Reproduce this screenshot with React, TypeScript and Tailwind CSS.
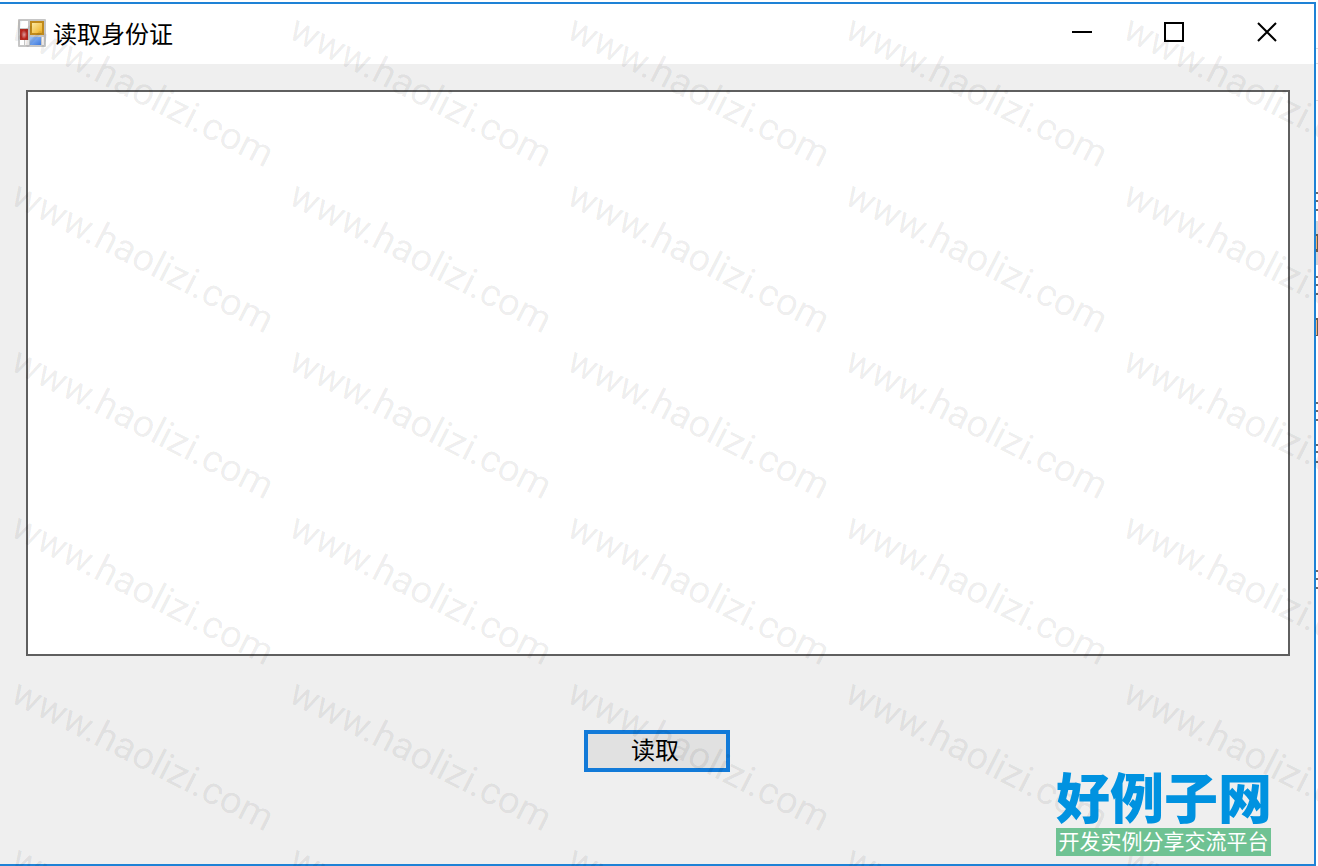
import React from 'react'

const WATERMARK_COUNT = 30

// Marks of the document that peek out behind the window's right edge
const edgeLines = [192, 200, 209, 276, 284, 293, 402, 410, 419, 444, 451, 461, 570, 578, 587]

const FormIcon: React.FC = () => (
  <svg width="28" height="28" viewBox="0 0 28 28" aria-hidden="true">
    <defs>
      <linearGradient id="gold" x1="0" y1="0" x2="1" y2="1">
        <stop offset="0" stopColor="#fbe9a4" />
        <stop offset="1" stopColor="#f0b020" />
      </linearGradient>
      <linearGradient id="blue" x1="0" y1="0" x2="1" y2="1">
        <stop offset="0" stopColor="#9cc4fa" />
        <stop offset="1" stopColor="#3d78dc" />
      </linearGradient>
      <radialGradient id="red">
        <stop offset="0" stopColor="#e8a0a0" />
        <stop offset="1" stopColor="#b8241c" />
      </radialGradient>
    </defs>
    <rect width="28" height="28" rx="1" fill="#c6c6c6" />
    <rect x="2" y="2" width="8" height="7" fill="#fff" />
    <rect x="2" y="21" width="4" height="5" fill="#fff" />
    <rect x="7" y="21" width="4" height="5" fill="#f4f4f4" />
    <rect x="24" y="18" width="2" height="8" fill="#f4f4f4" />
    <rect x="2" y="10" width="8" height="11" fill="#b02a20" />
    <rect x="3" y="11" width="6" height="9" fill="url(#red)" />
    <rect x="12" y="2" width="14" height="14" fill="#c08a1c" />
    <rect x="14" y="4" width="10" height="10" fill="url(#gold)" />
    <rect x="12" y="18" width="11" height="8" fill="url(#blue)" />
  </svg>
)

const TitleBar: React.FC = () => (
  <header className="flex h-[60px] shrink-0 justify-between bg-white pl-[18px]">
    <div className="flex items-center gap-[7px] pb-[2px]">
      <FormIcon />
      <h1 className="text-2xl text-black">读取身份证</h1>
    </div>
    <div className="flex h-full pb-1">
      <button type="button" aria-label="最小化" className="flex w-[92px] items-center justify-center">
        <svg width="20" height="20" viewBox="0 0 20 20">
          <path d="M0 10h20" stroke="#000" strokeWidth="2" />
        </svg>
      </button>
      <button type="button" aria-label="最大化" className="flex w-[92px] items-center justify-center">
        <svg width="20" height="20" viewBox="0 0 20 20">
          <rect x="1" y="1" width="18" height="18" fill="none" stroke="#000" strokeWidth="2" />
        </svg>
      </button>
      <button type="button" aria-label="关闭" className="flex w-[94px] items-center justify-center">
        <svg width="20" height="20" viewBox="0 0 20 20">
          <path d="M1 1l18 18M19 1L1 19" stroke="#000" strokeWidth="2" />
        </svg>
      </button>
    </div>
  </header>
)

const Watermark: React.FC = () => (
  <div
    aria-hidden="true"
    className="pointer-events-none absolute inset-0 grid auto-rows-[166px] grid-cols-[repeat(5,278px)] overflow-hidden pt-2 pl-1"
  >
    {Array.from({ length: WATERMARK_COUNT }, (_, i) => (
      <div key={i} className="flex items-center justify-center">
        <span className="rotate-[27deg] font-[Roboto,sans-serif] text-[38px] leading-none text-black/8">
          www.haolizi.com
        </span>
      </div>
    ))}
  </div>
)

const SiteLogo: React.FC = () => (
  <div className="relative z-10 mr-[43px] mb-2 flex w-[215px] flex-col self-end justify-self-end">
    <span className="text-center text-[54px] leading-[64px] font-black whitespace-nowrap text-[#0092e0]">
      好例子网
    </span>
    <span className="h-7 bg-[#6fc293] text-center text-[21px] leading-6 whitespace-nowrap text-white">
      开发实例分享交流平台
    </span>
  </div>
)

const BackgroundEdge: React.FC = () => (
  <svg className="absolute top-0 right-0" width="2" height="866" viewBox="0 0 2 866" aria-hidden="true">
    <rect y="221" width="2" height="44" fill="#d6d6d6" />
    <rect y="234" width="2" height="18" fill="#6b5a4c" />
    <rect y="236" width="1" height="13" fill="#f0b070" />
    <rect y="318" width="2" height="18" fill="#6b5a4c" />
    <rect y="320" width="1" height="15" fill="#f7b67c" />
    {[48, 63, 100].map((y) => (
      <rect key={y} y={y} width="2" height="1" fill="#dcdcdc" />
    ))}
    {edgeLines.map((y) => (
      <rect key={y} y={y} width="2" height="2" fill="#6e6868" />
    ))}
  </svg>
)

export default function App() {
  return (
    <div className="relative flex h-screen min-h-[480px] flex-col bg-white pt-[2px] pr-[2px] font-['Noto_Sans_CJK_SC',sans-serif]">
      <BackgroundEdge />
      <main className="flex min-h-0 flex-1 flex-col border-t-2 border-r-2 border-b-2 border-[#1e82d6] bg-[#efefef]">
        <TitleBar />
        <div className="flex min-h-0 flex-1 pt-[26px] pr-6 pl-[26px]">
          <textarea
            aria-label="身份证信息"
            className="flex-1 resize-none border-2 border-[#5f5f5f] bg-white p-2 text-2xl text-black outline-none"
          />
        </div>
        <footer className="grid h-[208px] shrink-0 grid-cols-3">
          <button
            type="button"
            className="col-start-2 mt-[74px] flex h-[42px] w-[146px] items-center justify-center justify-self-center border-4 border-[#127ad8] bg-[#e1e1e1] pr-1 pb-1 text-2xl text-black"
          >
            读取
          </button>
          <SiteLogo />
        </footer>
      </main>
      <Watermark />
    </div>
  )
}
